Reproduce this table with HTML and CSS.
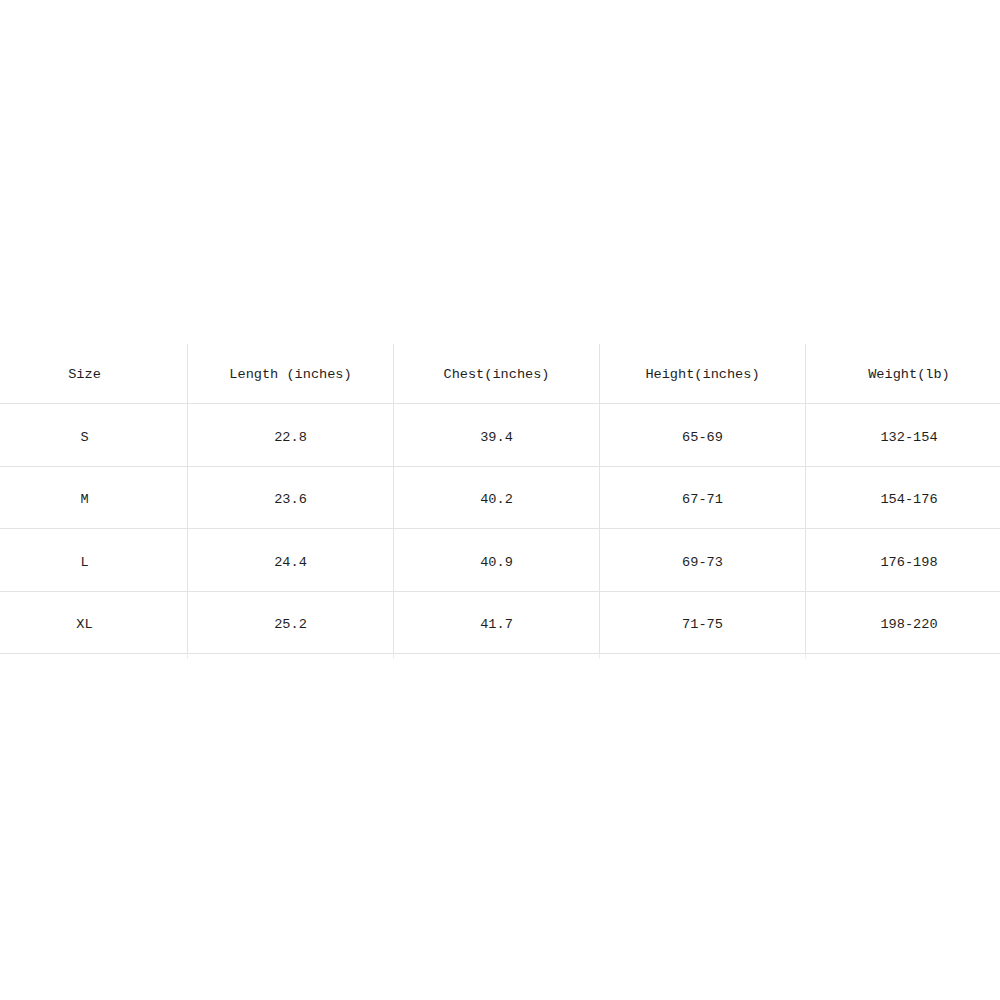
FILE: index.html
```html
<!DOCTYPE html>
<html>
<head>
<meta charset="utf-8">
<link rel="stylesheet" href="styles.css">
</head>
<body>
<div class="page">
  <div class="size-table">
    <div class="cell head">Size</div>
    <div class="cell head">Length (inches)</div>
    <div class="cell head">Chest(inches)</div>
    <div class="cell head">Height(inches)</div>
    <div class="cell head last">Weight(lb)</div>

    <div class="cell">S</div>
    <div class="cell">22.8</div>
    <div class="cell">39.4</div>
    <div class="cell">65-69</div>
    <div class="cell last">132-154</div>

    <div class="cell">M</div>
    <div class="cell">23.6</div>
    <div class="cell">40.2</div>
    <div class="cell">67-71</div>
    <div class="cell last">154-176</div>

    <div class="cell">L</div>
    <div class="cell">24.4</div>
    <div class="cell">40.9</div>
    <div class="cell">69-73</div>
    <div class="cell last">176-198</div>

    <div class="cell">XL</div>
    <div class="cell">25.2</div>
    <div class="cell">41.7</div>
    <div class="cell">71-75</div>
    <div class="cell last">198-220</div>

    <div class="tail"></div>
    <div class="tail"></div>
    <div class="tail"></div>
    <div class="tail"></div>
    <div class="tail last"></div>
  </div>
</div>
</body>
</html>
```

FILE: styles.css
```css
html, body {
  margin: 0;
  padding: 0;
  background: #ffffff;
}

.page {
  width: 1000px;
  height: 1000px;
  overflow: hidden;
  padding-top: 344px;
  box-sizing: border-box;
}

.size-table {
  display: grid;
  grid-template-columns: repeat(5, 206px);
  grid-template-rows: 60px repeat(4, 62.5px) 5px;
  margin-left: -18px;
  width: 1030px;
  font-family: "Liberation Mono", "DejaVu Sans Mono", monospace;
  font-size: 13.6px;
  color: #1e1e1e;
}

.cell {
  display: flex;
  align-items: center;
  justify-content: center;
  border-right: 1px solid #e3e3e3;
  border-bottom: 1px solid #e3e3e3;
  box-sizing: border-box;
  padding-top: 5px;
  white-space: pre;
}

.cell.head {
  padding-top: 1px;
}

.tail {
  border-right: 1px solid #eeeeee;
}

.last {
  border-right: none;
}
```
